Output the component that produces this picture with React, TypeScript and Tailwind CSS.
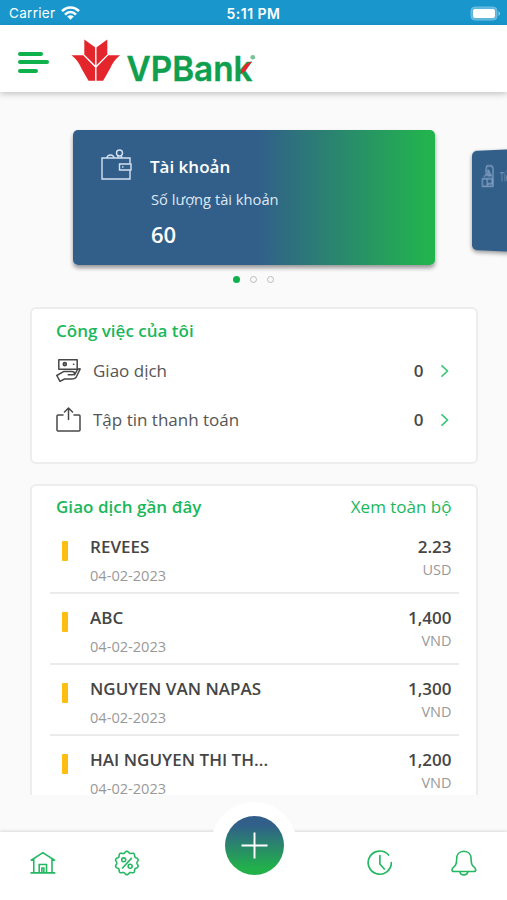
import React from "react";

const transactions = [
  { name: "REVEES", date: "04-02-2023", amount: "2.23", currency: "USD" },
  { name: "ABC", date: "04-02-2023", amount: "1,400", currency: "VND" },
  { name: "NGUYEN VAN NAPAS", date: "04-02-2023", amount: "1,300", currency: "VND" },
  { name: "HAI NGUYEN THI TH...", date: "04-02-2023", amount: "1,200", currency: "VND" },
];

function StatusBar() {
  return (
    <div className="grid h-[25px] grid-cols-3 items-center bg-[#1996cb] pt-[2px] font-['Inter',sans-serif] text-white">
      <div className="flex items-center gap-[6px] pl-[9px]">
        <span className="text-[13.5px] tracking-[0.3px]">Carrier</span>
        <svg className="-mt-[2px]" width="19" height="14" viewBox="0 0 19 14" fill="none" stroke="white" strokeWidth="2.6">
          <path d="M1 5.2C6 .2 13 .2 18 5.2" />
          <path d="M4 8.6C7.3 5.3 11.7 5.3 15 8.600" />
          <path d="M9.5 13.8 6.2 10.6c1.9-1.7 4.700-1.7 6.600 0z" fill="white" stroke="none" />
        </svg>
      </div>
      <span className="text-center text-[14px] font-semibold tracking-[0.5px]">5:11 PM</span>
      <svg className="-mt-[1px] mr-[6px] justify-self-end" width="31" height="15" viewBox="0 0 31 15">
        <rect x="1" y="1" width="26" height="13" rx="4" fill="#5cb6dc" stroke="#6fbfe1" />
        <rect x="3" y="3" width="22" height="9" rx="2" fill="white" />
        <path d="M28.5 5.2c2 .8 2 3.8 0 4.6z" fill="#8acce6" />
      </svg>
    </div>
  );
}

function Logo() {
  return (
    <svg width="190" height="48" viewBox="0 0 190 48">
      <g fill="#e5252c">
        <path d="M13.300 1.500 24.300 9.500V27.500L13.300 16.500z" />
        <path d="M36.300 1.500 25.300 9.500V27.500L36.300 16.500z" />
        <path d="M.5 17.300h11.800L24.300 29.600V42.700H17.500L10.500 30.500C8.500 26 5.500 21 .5 17.300z" />
        <path d="M49.100 17.300H37.300L25.300 29.600V42.700H32.100L39.100 30.500C41.100 26 44.100 21 49.100 17.300z" />
      </g>
      <path d="M12.500 16.800 24.800 29.300 37.100 16.800M24.800 8V43" fill="none" stroke="white" strokeWidth="1" />
      <text x="55.500" y="42.700" textLength="126" lengthAdjust="spacingAndGlyphs" fontFamily="Inter, sans-serif" fontSize="34.500" fontWeight="600" fill="#0f9f4f" stroke="#0f9f4f" strokeWidth=".4">
        VPBank
      </text>
      <path d="M169.500 36C170.500 30 173.500 25.500 180.800 23.500L174.500 33z" fill="#e5252c" />
      <circle cx="181.800" cy="19.300" r="2.300" fill="#72c491" />
    </svg>
  );
}

function Header() {
  return (
    <header className="relative z-10 flex h-[67px] items-center bg-white pl-[18px] shadow-[0_2px_6px_rgba(0,0,0,0.22)]">
      <div className="flex flex-col gap-[4.500px] pt-[7px]">
        <span className="h-1 w-[25px] rounded-full bg-[#0eb14b]" />
        <span className="h-1 w-[31px] rounded-full bg-[#0eb14b]" />
        <span className="h-1 w-5 rounded-full bg-[#0eb14b]" />
      </div>
      <div className="pt-[6px] pl-[22px]">
        <Logo />
      </div>
    </header>
  );
}

function WalletIcon() {
  return (
    <svg width="32" height="32" viewBox="0 0 32 32" fill="none" stroke="#d5e2f2" strokeWidth="1.400">
      <path d="M29 14.500V9H1V30h28V21.500" />
      <path d="M18.500 15H30v6H18.500z" />
      <circle cx="18.500" cy="4" r="3" />
      <path d="M6 9c.5-4 6.500-4 7 0M17 7V9M20.500 7V9" />
      <path d="M21.800 17.300v1.500" />
    </svg>
  );
}

function Carousel() {
  return (
    <section className="flex w-[560px] items-center gap-[37px] pt-[38px] pl-[73px]">
      <div className="flex h-[135px] w-[362px] shrink-0 rounded-[5px] bg-[linear-gradient(90deg,#315f8a_0%,#315f8a_51%,#22b34e_98%)] pl-[28px] shadow-[0_3px_4px_rgba(0,0,0,0.4)]">
        <div className="pt-[19px]">
          <WalletIcon />
        </div>
        <div className="flex flex-col pl-[17px] text-white">
          <span className="mt-[25px] text-[17px] leading-6 font-semibold">Tài khoản</span>
          <span className="mt-[10px] pl-px text-[14.700px] leading-5 text-[#dfe8f3]">Số lượng tài khoản</span>
          <span className="mt-[10px] pl-px text-[22px] leading-[30px] font-semibold">60</span>
        </div>
      </div>
      <div className="mt-[5px] flex h-[99px] w-[70px] shrink-0 origin-left [transform:perspective(400px)_rotateY(-20deg)] rounded-[5px] bg-[#315f8a] pt-[14px] pl-[10px] shadow-[0_2px_4px_rgba(0,0,0,0.4)]">
        <svg className="shrink-0" width="13" height="23" viewBox="0 0 13 23" fill="none" stroke="#7f9dc0" strokeWidth="1.300">
          <path d="M4.500 7 5.500 1.500h5l1.500 2V21.500H1V14h5v7M5 5v5l-2.500 2M7 5l3 6H7V5M5 10l6 1M6 14h5v5H6z" />
        </svg>
        <span className="mt-[4px] ml-[6px] origin-left scale-x-60 text-[12px] whitespace-nowrap text-[#7d9dbd]">Tiền</span>
      </div>
    </section>
  );
}

function TransferIcon() {
  return (
    <svg width="25" height="24" viewBox="0 0 25 24" fill="none" stroke="#484848" strokeWidth="1.500" strokeLinejoin="round" strokeLinecap="round">
      <path d="M2.800.8h18.400v9.500H2.800z" />
      <circle cx="8.800" cy="5.200" r="1.600" fill="#777" />
      <path d="M17.500 5.200h.3" />
      <path d="M.8 16.500 7.500 12.600h8c1.500 0 3 .4 3 1.700 0 1-.8 1.500-1.800 1.500h-4.500M.8 16.500 4 22.300l4.500-2.300h7c2 0 3.500-.2 4.500-1.500l4.200-8.500c-1.500-.7-2.500.2-3 1.200l-2.700 4.600" />
    </svg>
  );
}

function ShareIcon() {
  return (
    <svg width="25" height="25" viewBox="0 0 25 25" fill="none" stroke="#484848" strokeWidth="1.500" strokeLinejoin="round" strokeLinecap="round">
      <path d="M7 8H2Q1 8 1 9V23Q1 24 2 24H23Q24 24 24 23V9Q24 8 23 8H18" />
      <path d="M12.500 12.500V1.500M8.500 5l4-4 4 4" />
    </svg>
  );
}

function TaskRow({ icon, label }: { icon: React.ReactNode; label: string }) {
  return (
    <div className="flex h-[49px] items-center">
      {icon}
      <span className="ml-3 flex-1 text-[17px] text-[#555]">{label}</span>
      <span className="text-[17px] font-semibold text-[#484848]">0</span>
      <svg className="mt-px mr-[2px] ml-[16.500px]" width="10" height="14" viewBox="0 0 10 14" fill="none" stroke="#39c675" strokeWidth="1.600">
        <path d="M1.500 1.300 7.500 7l-6 5.700" />
      </svg>
    </div>
  );
}

function Tasks() {
  return (
    <section className="mr-[29px] ml-[30px] h-[157px] rounded-[6px] border-2 border-[#ededed] bg-white pr-6 pl-6">
      <h2 className="pt-[10px] text-[17px] leading-6 font-semibold text-[#1bb75b]">Công việc của tôi</h2>
      <div className="pt-[3px]">
        <TaskRow icon={<TransferIcon />} label="Giao dịch" />
        <TaskRow icon={<ShareIcon />} label="Tập tin thanh toán" />
      </div>
    </section>
  );
}

function Recent() {
  return (
    <section className="mr-[29px] ml-[30px] h-[311px] overflow-hidden rounded-t-[6px] border-2 border-b-0 border-[#ededed] bg-white">
      <div className="flex justify-between pr-[24.500px] pl-6 pt-[9px] text-[17px] leading-6 text-[#1bb75b]">
        <h2 className="font-semibold tracking-[0.03px]">Giao dịch gần đây</h2>
        <span>Xem toàn bộ</span>
      </div>
      <div className="mr-[17px] ml-[18px] pt-[4px]">
        {transactions.map((t) => (
          <div key={t.name} className="flex h-[71px] border-b-2 border-[#ebebeb] pr-[7.500px] pl-[12px]">
            <span className="mt-[18px] h-[19.500px] w-[5.500px] rounded-[1px] bg-[#fdbe13]" />
            <div className="ml-[22.500px] flex flex-1 flex-col pt-[12px]">
              <span className="text-[17px] leading-6 font-semibold tracking-[0.03px] text-[#454545]">{t.name}</span>
              <span className="mt-[6px] text-[14.600px] leading-5 text-[#999]">{t.date}</span>
            </div>
            <div className="flex flex-col items-end pt-[12px]">
              <span className="text-[17px] leading-6 font-semibold text-[#454545]">{t.amount}</span>
              <span className="mt-[1px] text-[14.500px] leading-5 text-[#999]">{t.currency}</span>
            </div>
          </div>
        ))}
      </div>
    </section>
  );
}

const badgePoints = Array.from({ length: 120 }, (_, i) => {
  const a = (i / 120) * Math.PI * 2;
  const r = 11 + 0.9 * Math.cos(a * 10);
  return `${(13 + r * Math.sin(a)).toFixed(2)},${(13 - r * Math.cos(a)).toFixed(2)}`;
}).join(" ");

function BottomNav() {
  return (
    <nav className="relative flex h-[68px] bg-white px-[30px] shadow-[0_-1px_3px_rgba(0,0,0,0.13)]">
      <svg className="mt-[18px]" width="26" height="26" viewBox="0 0 26 26" fill="none" stroke="#24b862" strokeWidth="1.600">
        <path d="M.8 10.500 13 2.500 25.200 10.500M3.800 9V22.500M22.200 9V22.500M.5 23h25M9.300 22.500V14.500h7.400v8M12 22.500V18h2v4.500" />
      </svg>
      <svg className="mt-[17.500px] ml-[58px]" width="26" height="26" viewBox="0 0 26 26" fill="none" stroke="#24b862" strokeWidth="1.600" strokeLinejoin="round">
        <polygon points={badgePoints} />
        <path d="M18 7.800 8.200 18.500" />
        <circle cx="9.800" cy="9.800" r="2" />
        <circle cx="16.300" cy="16.300" r="2" />
      </svg>
      <svg className="mt-[17.500px] ml-[227px]" width="26" height="26" viewBox="0 0 26 26" fill="none" stroke="#24b862" strokeWidth="1.700" strokeLinecap="round">
        <path d="M24.600 12.500A11.700 11.700 0 1 1 21.800 5M13 5.500v8.500l4.500 5" />
      </svg>
      <svg className="mt-[17.500px] ml-[59px]" width="26" height="26" viewBox="0 0 26 26" fill="none" stroke="#24b862" strokeWidth="1.600" strokeLinejoin="round">
        <path d="M13 1.200c-4.800 0-7.300 3.400-7.300 7.800 0 4-.3 6-2.200 7.500-1.700 1.300-2.500 2-2.500 3.500 0 1.200.7 1.600 2 1.600h20c1.300 0 2-.4 2-1.600 0-1.500-.8-2.200-2.500-3.500-1.900-1.500-2.200-3.500-2.200-7.500 0-4.400-2.500-7.800-7.300-7.800zM9 22c.5 4 7.500 4 8 0" />
      </svg>
      <div className="absolute top-[-30px] left-[211px] flex h-[86px] w-[86px] items-center justify-center rounded-full bg-white">
        <div className="flex h-[59px] w-[59px] items-center justify-center rounded-full bg-[linear-gradient(180deg,#315f8a_15%,#22b04b_88%)]">
          <svg width="27" height="27" viewBox="0 0 28 28" stroke="white" strokeWidth="2">
            <path d="M14 .5v27M.5 14h27" />
          </svg>
        </div>
      </div>
    </nav>
  );
}

export default function App() {
  return (
    <div className="flex h-[900px] w-[507px] flex-col overflow-hidden bg-[#fafafa] font-['Open_Sans','Noto_Sans',sans-serif]">
      <StatusBar />
      <Header />
      <main className="flex-1">
        <Carousel />
        <div className="flex h-[42px] justify-center gap-[10px] pt-[11px]">
          <span className="h-[7px] w-[7px] rounded-full bg-[#0eb14b]" />
          <span className="h-[7px] w-[7px] rounded-full border border-[#bbb]" />
          <span className="h-[7px] w-[7px] rounded-full border border-[#bbb]" />
        </div>
        <Tasks />
        <div className="h-5" />
        <Recent />
      </main>
      <BottomNav />
    </div>
  );
}
